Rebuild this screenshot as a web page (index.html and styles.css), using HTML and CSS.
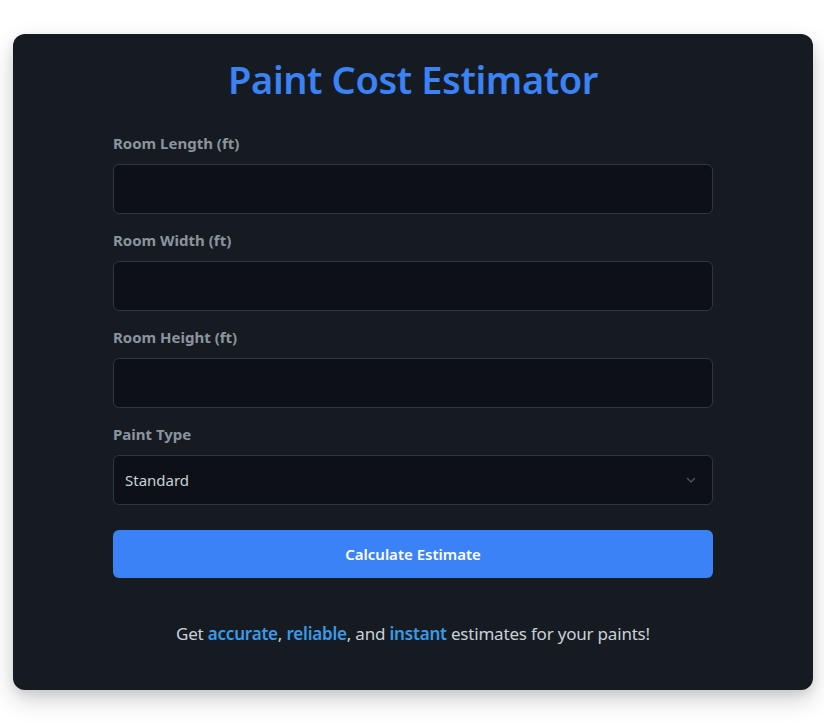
FILE: index.html
```html
<!DOCTYPE html>
<html lang="en">
<head>
<meta charset="utf-8">
<title>Paint Cost Estimator</title>
<link rel="stylesheet" href="styles.css">
</head>
<body>
<div class="card">
  <h1 class="title">Paint Cost Estimator</h1>
  <form class="form">
    <div class="field">
      <label class="label" for="len">Room Length (ft)</label>
      <input class="input" id="len" type="number">
    </div>
    <div class="field">
      <label class="label" for="wid">Room Width (ft)</label>
      <input class="input" id="wid" type="number">
    </div>
    <div class="field">
      <label class="label" for="hei">Room Height (ft)</label>
      <input class="input" id="hei" type="number">
    </div>
    <div class="field field-last">
      <label class="label" for="type">Paint Type</label>
      <div class="select-wrap">
        <select class="input select" id="type">
          <option>Standard</option>
          <option>Premium</option>
        </select>
        <svg class="chevron" width="12" height="12" viewBox="0 0 12 12"><path d="M2.5 4.5 L6 8 L9.5 4.5" fill="none" stroke="#4b5563" stroke-width="1.4" stroke-linecap="round" stroke-linejoin="round"/></svg>
      </div>
    </div>
    <button class="button" type="button">Calculate Estimate</button>
  </form>
  <p class="footer">Get <span class="hl">accurate</span>, <span class="hl">reliable</span>, and <span class="hl">instant</span> estimates for your paints!</p>
</div>
</body>
</html>
```
FILE: styles.css
```css
* { box-sizing: border-box; }
html, body { margin: 0; padding: 0; background: #ffffff; }
body {
  font-family: "Noto Sans", "Open Sans", sans-serif;
  padding: 34px 11px 34px 13px;
}
.card {
  width: 800px;
  background: #161b22;
  border-radius: 12px;
  box-shadow: 0 10px 25px rgba(0,0,0,0.18), 0 4px 10px rgba(0,0,0,0.08);
  padding: 20px 100px 43px;
  display: flex;
  flex-direction: column;
  align-items: center;
}
.title {
  margin: 0 0 30px;
  color: #3b82f6;
  font-size: 38px;
  font-weight: 600;
  letter-spacing: -0.4px;
  line-height: 50px;
  text-align: center;
}
.form {
  width: 600px;
  display: flex;
  flex-direction: column;
}
.field {
  display: flex;
  flex-direction: column;
  margin-bottom: 17px;
}
.field-last { margin-bottom: 25px; }
.label {
  color: #8b949e;
  font-size: 15px;
  font-weight: 700;
  line-height: 20px;
  margin-bottom: 10px;
  position: relative;
  top: -1px;
}
.input {
  height: 50px;
  width: 100%;
  background: #0d1117;
  border: 1px solid #30363d;
  border-radius: 6px;
  color: #c9d1d9;
  font-family: inherit;
  font-size: 15px;
  padding: 0 11px;
  outline: none;
}
.select-wrap { position: relative; }
.select {
  appearance: none;
  -webkit-appearance: none;
}
.chevron {
  position: absolute;
  right: 16px;
  top: 19px;
}
.button {
  height: 48px;
  background: #3b82f6;
  border: none;
  border-radius: 6px;
  color: #ffffff;
  font-family: inherit;
  font-size: 15px;
  font-weight: 600;
}
.footer {
  margin: 43px 0 0;
  color: #c9d1d9;
  font-size: 17px;
  letter-spacing: -0.2px;
  line-height: 26px;
  text-align: center;
}
.hl { color: #3b9ae6; font-weight: 600; }
```
